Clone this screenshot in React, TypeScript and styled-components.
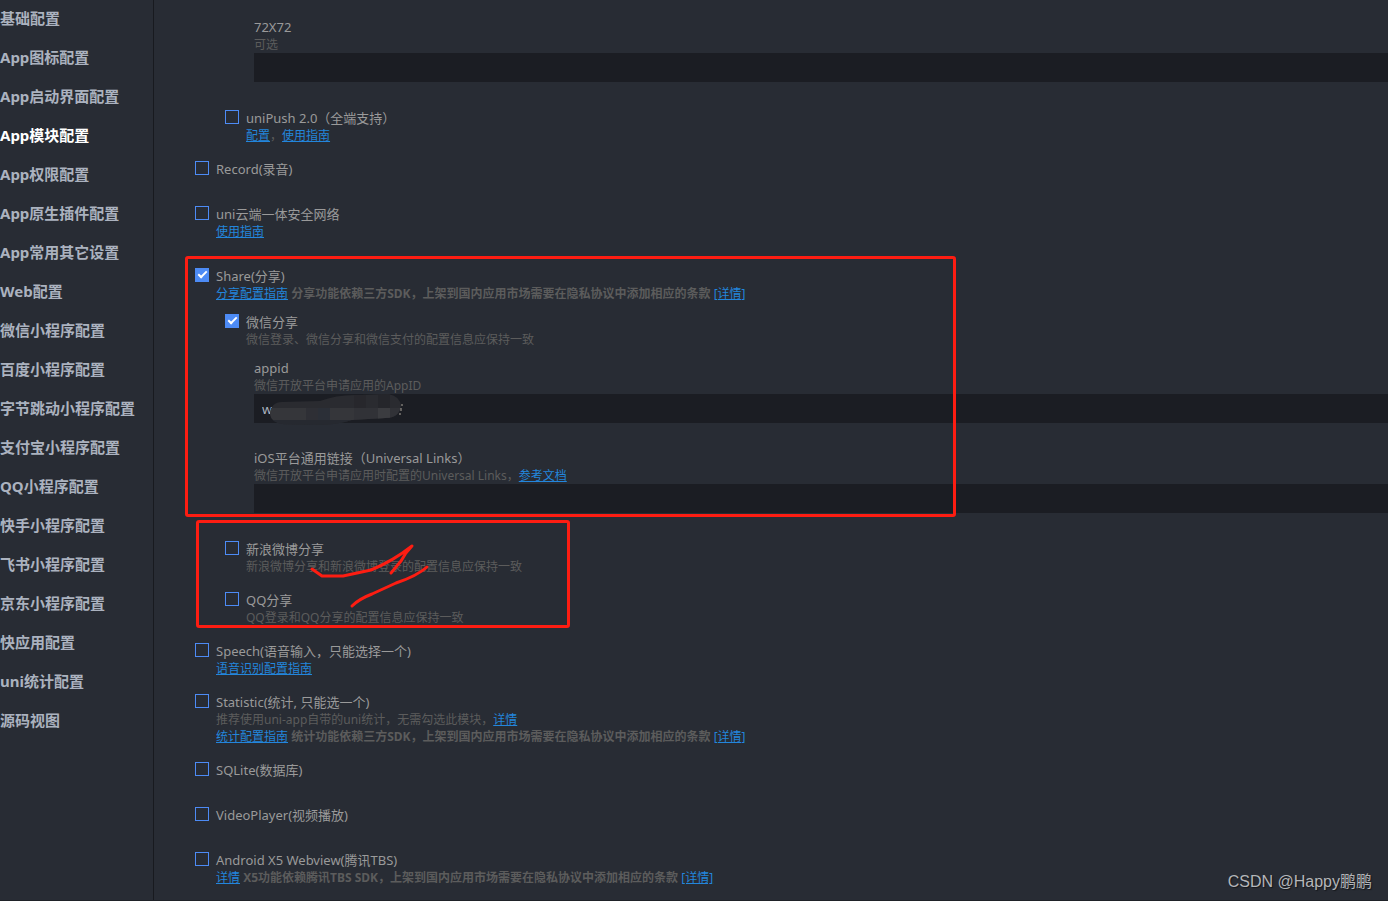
import React, { ReactNode, useId } from "react";
import styled, { createGlobalStyle } from "styled-components";

const GlobalStyle = createGlobalStyle`
  *, *::before, *::after { box-sizing: border-box; }
  html { background: #282c34; }
  body {
    margin: 0;
    background: #282c34;
    color: #9a9a9a;
    font-family: "Noto Sans", "Noto Sans CJK SC", sans-serif;
    font-size: 13px;
    line-height: 18px;
    overflow: hidden;
  }
`;

const Page = styled.div`
  display: flex;
  min-height: 100vh;
  position: relative;
  border-bottom: 1px solid #1f2228;
`;

const Sidebar = styled.nav`
  flex: 0 0 154px;
  border-right: 1px solid #181a1f;
  display: flex;
  flex-direction: column;
`;

const SidebarLink = styled.a<{ $active?: boolean }>`
  height: 39px;
  line-height: 36px;
  font-size: 15px;
  font-weight: 700;
  white-space: nowrap;
  text-decoration: none;
  color: ${(p) => (p.$active ? "#ffffff" : "#abb2bf")};
`;

const Main = styled.main`
  flex: 1 1 auto;
  min-width: 0;
  padding: 18px 0 0 41px;
`;

const Nested = styled.div`
  padding-left: 30px;
`;

const ModuleItem = styled.div<{ $gap: number }>`
  display: grid;
  grid-template-columns: 14px minmax(0, 1fr);
  column-gap: 7px;
  padding-bottom: ${(p) => p.$gap}px;
`;

const Checkbox = styled.input`
  appearance: none;
  width: 14px;
  height: 14px;
  margin: 1px 0 0;
  border: 1px solid #4d8bf5;
  position: relative;

  &:checked {
    background: #4d8bf5;
  }
  &:checked::after {
    content: "";
    position: absolute;
    left: 2px;
    top: 2px;
    width: 9px;
    height: 5px;
    border-left: 2px solid #ffffff;
    border-bottom: 2px solid #ffffff;
    transform: rotate(-45deg);
  }
`;

const ItemLabel = styled.label`
  display: block;
  height: 18px;
  white-space: nowrap;
`;

const Note = styled.div`
  height: 17px;
  line-height: 17px;
  font-size: 12px;
  color: #5c5c5c;
  white-space: nowrap;
`;

const NoteLink = styled.a`
  color: #2386dc;
  text-decoration: underline;
`;

const Fields = styled.div`
  display: grid;
  row-gap: 26px;
  padding: 0 0 27px 29px;
`;

const TextInput = styled.input`
  display: block;
  width: 100%;
  height: 29px;
  padding: 0 8px;
  border: 0;
  outline: 0;
  background: #1b1d23;
  color: #abb2bf;
  font: inherit;
`;

const InputWrap = styled.div`
  position: relative;
`;

const Smudge = styled.svg`
  position: absolute;
  left: 14px;
  top: 0;
`;

const Annotated = styled.section`
  position: relative;
`;

const ShareFrame = styled.div`
  position: absolute;
  left: -10px;
  top: -11px;
  width: 771px;
  height: 261px;
  border: 3px solid #fd1d12;
  border-radius: 3px;
  pointer-events: none;
`;

const OptionalFrame = styled.div`
  position: absolute;
  left: -29px;
  top: -20px;
  width: 374px;
  height: 108px;
  border: 3px solid #fd1d12;
  border-radius: 3px;
  pointer-events: none;
`;

const Strokes = styled.svg`
  position: absolute;
  left: 80px;
  top: 0;
  pointer-events: none;
`;

const Watermark = styled.div`
  position: absolute;
  right: 16px;
  bottom: 6px;
  font: 16px/24px "Liberation Sans", "Noto Sans CJK SC", sans-serif;
  color: #b4b6b9;
  text-shadow: 1px 1px 1px #15171b;
`;

type ModuleProps = {
  label: string;
  checked?: boolean;
  gap?: number;
  children?: ReactNode;
};

function Module({ label, checked, gap = 16, children }: ModuleProps) {
  const id = useId();
  return (
    <ModuleItem $gap={gap}>
      <Checkbox type="checkbox" id={id} defaultChecked={checked} />
      <div>
        <ItemLabel htmlFor={id}>{label}</ItemLabel>
        {children}
      </div>
    </ModuleItem>
  );
}

type FieldProps = {
  label: string;
  note: ReactNode;
  value?: string;
  children?: ReactNode;
};

function Field({ label, note, value, children }: FieldProps) {
  const id = useId();
  return (
    <div>
      <ItemLabel htmlFor={id}>{label}</ItemLabel>
      <Note>{note}</Note>
      <InputWrap>
        <TextInput type="text" id={id} defaultValue={value} />
        {children}
      </InputWrap>
    </div>
  );
}

const sections = [
  "基础配置",
  "App图标配置",
  "App启动界面配置",
  "App模块配置",
  "App权限配置",
  "App原生插件配置",
  "App常用其它设置",
  "Web配置",
  "微信小程序配置",
  "百度小程序配置",
  "字节跳动小程序配置",
  "支付宝小程序配置",
  "QQ小程序配置",
  "快手小程序配置",
  "飞书小程序配置",
  "京东小程序配置",
  "快应用配置",
  "uni统计配置",
  "源码视图",
];

export default function App() {
  return (
    <Page>
      <GlobalStyle />
      <Sidebar>
        {sections.map((name) => (
          <SidebarLink key={name} href="#" $active={name === "App模块配置"}>
            {name}
          </SidebarLink>
        ))}
      </Sidebar>
      <Main>
        <Nested>
          <Fields>
            <Field label="72X72" note="可选" />
          </Fields>
          <Module label="uniPush 2.0（全端支持）">
            <Note>
              <NoteLink href="#">配置</NoteLink>，<NoteLink href="#">使用指南</NoteLink>
            </Note>
          </Module>
        </Nested>
        <Module label="Record(录音)" gap={27} />
        <Module label="uni云端一体安全网络" gap={27}>
          <Note>
            <NoteLink href="#">使用指南</NoteLink>
          </Note>
        </Module>

        <Annotated>
          <Module label="Share(分享)" checked gap={11}>
            <Note>
              <NoteLink href="#">分享配置指南</NoteLink>{" "}
              <b>分享功能依赖三方SDK，上架到国内应用市场需要在隐私协议中添加相应的条款</b>{" "}
              <NoteLink href="#">[详情]</NoteLink>
            </Note>
          </Module>
          <Nested>
            <Module label="微信分享" checked gap={11}>
              <Note>微信登录、微信分享和微信支付的配置信息应保持一致</Note>
            </Module>
            <Fields>
              <Field label="appid" note="微信开放平台申请应用的AppID" value="w">
                <Smudge width="136" height="32" aria-hidden="true">
                  <defs>
                    <clipPath id="smudge">
                      <path d="M2 20 Q3 8 14 8 L52 7 Q70 0 92 1 L120 0 Q132 2 133 12 Q131 24 118 24 L84 26 Q70 31 46 31 L14 30 Q3 28 2 20Z" />
                    </clipPath>
                  </defs>
                  <g clipPath="url(#smudge)">
                    <rect width="136" height="32" fill="#2a2b30" />
                    <rect x="0" y="14" width="38" height="12" fill="#35363a" />
                    <rect x="38" y="14" width="12" height="12" fill="#2e2f35" />
                    <rect x="50" y="14" width="12" height="12" fill="#2b2f37" />
                    <rect x="62" y="14" width="24" height="12" fill="#35363a" />
                    <rect x="86" y="14" width="48" height="12" fill="#313237" />
                    <rect x="110" y="14" width="12" height="12" fill="#3b3c40" />
                    <rect x="86" y="0" width="12" height="14" fill="#27272c" />
                    <rect x="110" y="0" width="12" height="14" fill="#25262b" />
                    <rect x="0" y="26" width="100" height="6" fill="#262930" />
                  </g>
                  <path d="M134 10v2M133 14v3M132 19v2" stroke="#aaa49a" />
                </Smudge>
              </Field>
              <Field
                label="iOS平台通用链接（Universal Links）"
                note={
                  <>
                    微信开放平台申请应用时配置的Universal Links，
                    <NoteLink href="#">参考文档</NoteLink>
                  </>
                }
              />
            </Fields>
          </Nested>
          <ShareFrame />
        </Annotated>

        <Nested>
          <Annotated>
            <Module label="新浪微博分享">
              <Note>新浪微博分享和新浪微博登录的配置信息应保持一致</Note>
            </Module>
            <Module label="QQ分享">
              <Note>QQ登录和QQ分享的配置信息应保持一致</Note>
            </Module>
            <OptionalFrame />
            <Strokes
              width="130"
              height="72"
              fill="none"
              stroke="#fd1d12"
              strokeWidth="3"
              strokeLinecap="round"
              strokeLinejoin="round"
              aria-hidden="true"
            >
              <path d="M7 29 L17 36 L38 36 L66 30 Q88 21 107 6 Q100 13 96 21 L86 33" />
              <path d="M47 66 Q54 59 67 54 L91 43 Q112 36 122 27" />
            </Strokes>
          </Annotated>
        </Nested>

        <Module label="Speech(语音输入，只能选择一个)">
          <Note>
            <NoteLink href="#">语音识别配置指南</NoteLink>
          </Note>
        </Module>
        <Module label="Statistic(统计, 只能选一个)">
          <Note>
            推荐使用uni-app自带的uni统计，无需勾选此模块，<NoteLink href="#">详情</NoteLink>
          </Note>
          <Note>
            <NoteLink href="#">统计配置指南</NoteLink>{" "}
            <b>统计功能依赖三方SDK，上架到国内应用市场需要在隐私协议中添加相应的条款</b>{" "}
            <NoteLink href="#">[详情]</NoteLink>
          </Note>
        </Module>
        <Module label="SQLite(数据库)" gap={27} />
        <Module label="VideoPlayer(视频播放)" gap={27} />
        <Module label="Android X5 Webview(腾讯TBS)" gap={0}>
          <Note>
            <NoteLink href="#">详情</NoteLink>{" "}
            <b>X5功能依赖腾讯TBS SDK，上架到国内应用市场需要在隐私协议中添加相应的条款</b>{" "}
            <NoteLink href="#">[详情]</NoteLink>
          </Note>
        </Module>
      </Main>
      <Watermark>CSDN @Happy鹏鹏</Watermark>
    </Page>
  );
}
